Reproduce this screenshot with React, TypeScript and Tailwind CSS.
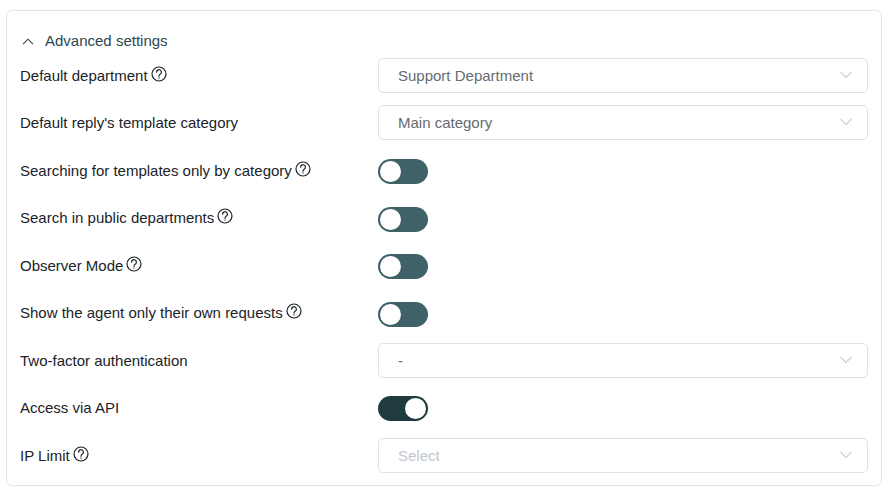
import React from "react";

const Help = () => (
  <svg width="16" height="16" viewBox="0 0 16 16" fill="none" stroke="#1b2328" strokeWidth="1.2" className="ml-[3px] -mt-[3px] shrink-0">
    <circle cx="8" cy="8" r="7" />
    <path d="M5.6 6.2a2.4 2.4 0 1 1 3.8 1.9c-.9.6-1.4 1-1.4 2.1" strokeLinecap="round" />
    <path d="M8 11.5v1.1" strokeWidth="1.3" />
  </svg>
);

const Chevron = () => (
  <svg width="14" height="8" viewBox="0 0 14 8" fill="none" stroke="#c9cfdb" strokeWidth="1.2" className="shrink-0 -mt-[1px]">
    <path d="M1.5 1l5.5 5.5L12.5 1" />
  </svg>
);

const Label = ({ text, help, shift }: { text: string; help?: boolean; shift?: string }) => (
  <div className={`w-[358px] shrink-0 flex items-center text-[15px] leading-[20px] text-[#1b2328] ${shift ?? ""}`}>
    <span>{text}</span>
    {help && <Help />}
  </div>
);

const SelectRow = ({ text, value, help, placeholder, mt }: { text: string; value: string; help?: boolean; placeholder?: boolean; mt: string }) => (
  <div className={`flex items-center ${mt}`}>
    <Label text={text} help={help} />
    <div className="flex-1 h-[35px] rounded-[5px] border border-[#dfe1ea] bg-white flex items-center justify-between pl-[19px] pr-[14px]">
      <span className={`text-[15px] pt-[1px] ${placeholder ? "text-[#c2c6d0]" : "text-[#666b70]"}`}>{value}</span>
      <Chevron />
    </div>
  </div>
);

const ToggleRow = ({ text, help, on, mt, shift }: { text: string; help?: boolean; on?: boolean; mt: string; shift: string }) => (
  <div className={`flex items-center ${mt}`}>
    <Label text={text} help={help} shift={shift} />
    <div className={`w-[50px] h-[25px] rounded-full p-[2px] flex items-center ${on ? "bg-[#1f3b40] justify-end" : "bg-[#3f6268] justify-start"}`}>
      <div className="w-[21px] h-[21px] rounded-full bg-white" />
    </div>
  </div>
);

export default function App() {
  return (
    <div className="w-[888px] h-[490px] bg-white pt-[10px] pl-[6px] pr-[6px] font-['Liberation_Sans',Arial,sans-serif]">
      <div className="h-[476px] rounded-[6px] border border-[#e0e1ea] pl-[13px] pr-[13px] pt-[20px]">
        <div className="flex items-center h-[20px] text-[15px] text-[#2c4650]">
          <svg width="12" height="7" viewBox="0 0 12 7" fill="none" stroke="#2c4650" strokeWidth="1.1" className="mr-[11px] ml-[2px]">
            <path d="M1 6.2l5-5 5 5" />
          </svg>
          Advanced settings
        </div>
        <SelectRow mt="mt-[7px]" text="Default department" help value="Support Department" />
        <SelectRow mt="mt-[12px]" text="Default reply's template category" value="Main category" />
        <ToggleRow mt="mt-[19px]" shift="-mt-[2px]" text="Searching for templates only by category" help />
        <ToggleRow mt="mt-[23px]" shift="-mt-[4px]" text="Search in public departments" help />
        <ToggleRow mt="mt-[22px]" shift="-mt-[2px]" text="Observer Mode" help />
        <ToggleRow mt="mt-[23px]" shift="-mt-[4px]" text="Show the agent only their own requests" help />
        <SelectRow mt="mt-[16px]" text="Two-factor authentication" value="-" />
        <ToggleRow mt="mt-[18px]" shift="-mt-[2px]" text="Access via API" on />
        <SelectRow mt="mt-[17px]" text="IP Limit" help value="Select" placeholder />
      </div>
    </div>
  );
}
